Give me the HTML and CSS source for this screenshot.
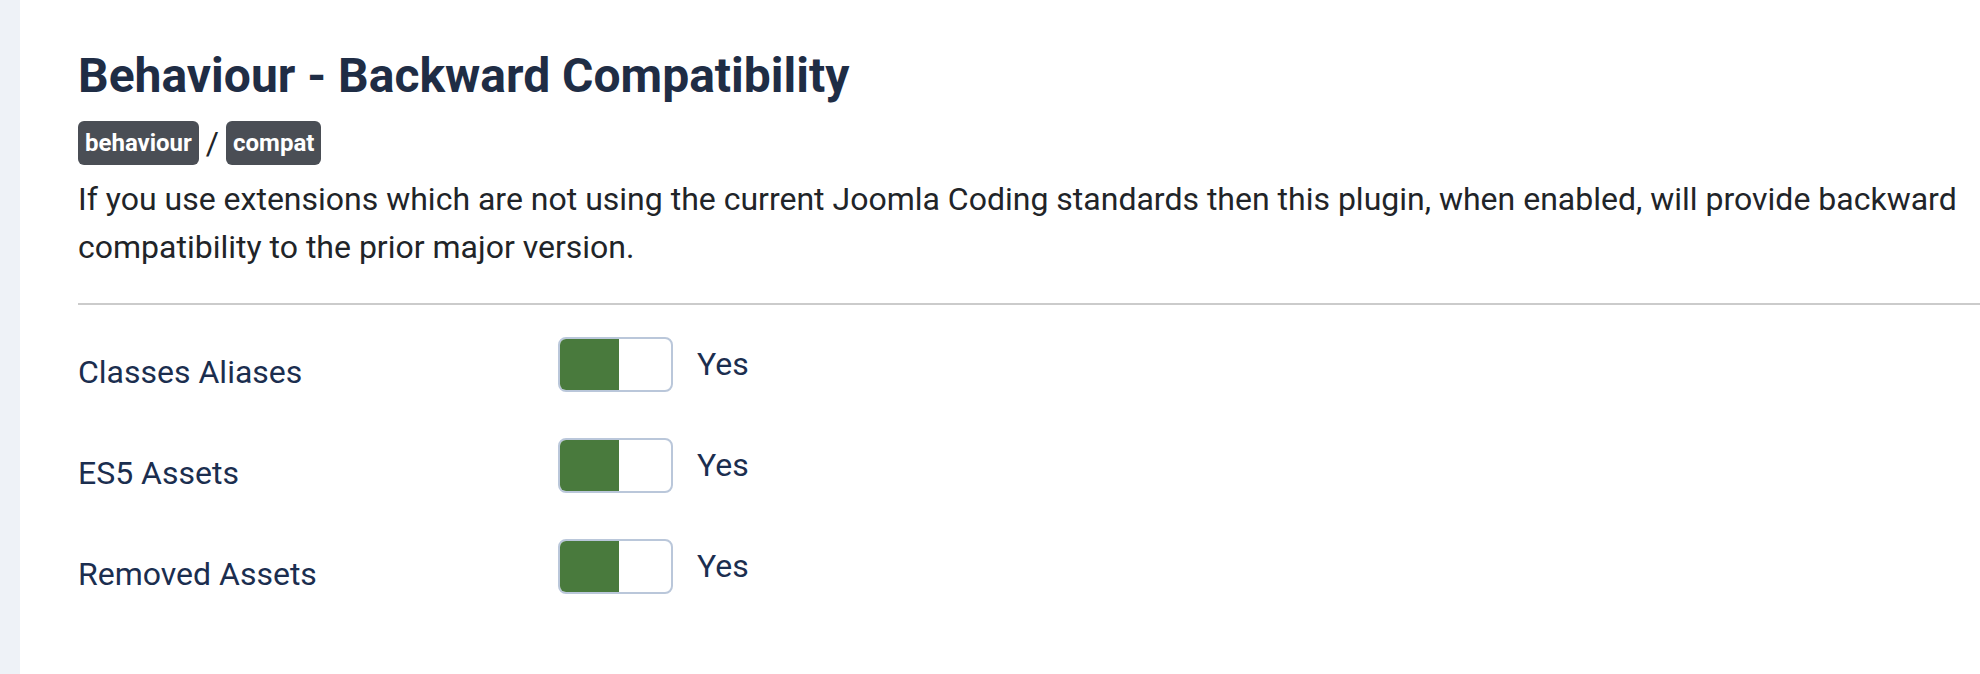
FILE: index.html
```html
<!DOCTYPE html>
<html lang="en">
<head>
<meta charset="utf-8">
<title>Behaviour - Backward Compatibility</title>
<link rel="stylesheet" href="styles.css">
</head>
<body>
<div class="page">
  <aside class="strip"></aside>
  <main class="content">
    <h2 class="title">Behaviour - Backward Compatibility</h2>
    <div class="tags"><span class="badge">behaviour</span><span class="sep">/</span><span class="badge">compat</span></div>
    <p class="desc">If you use extensions which are not using the current Joomla Coding standards then this plugin, when enabled, will provide backward compatibility to the prior major version.</p>
    <hr class="rule">
    <div class="group">
      <div class="label">Classes Aliases</div>
      <div class="controls"><span class="switch"><span class="knob"></span></span><span class="state">Yes</span></div>
    </div>
    <div class="group">
      <div class="label">ES5 Assets</div>
      <div class="controls"><span class="switch"><span class="knob"></span></span><span class="state">Yes</span></div>
    </div>
    <div class="group">
      <div class="label">Removed Assets</div>
      <div class="controls"><span class="switch"><span class="knob"></span></span><span class="state">Yes</span></div>
    </div>
  </main>
</div>
</body>
</html>
```

FILE: styles.css
```css
html, body {
  margin: 0;
  padding: 0;
  background: #ffffff;
  overflow: hidden;
}
body {
  font-family: Roboto, "Liberation Sans", sans-serif;
  font-size: 32px;
  line-height: 1.5;
  color: #212428;
}
.page {
  display: flex;
  min-height: 674px;
}
.strip {
  width: 20px;
  flex: 0 0 20px;
  background: #eef2f7;
}
.content {
  flex: 1;
  padding: 47px 0 0 58px;
  min-width: 0;
}
.title {
  margin: 0 0 16px;
  font-size: 48px;
  line-height: 1.2;
  font-weight: 700;
  color: #1f2d45;
}
.tags {
  display: flex;
  align-items: center;
  height: 44px;
  margin-top: 5px;
}
.badge {
  display: inline-block;
  background: #4a4e55;
  color: #ffffff;
  font-size: 24px;
  font-weight: 700;
  line-height: 1;
  padding: 10px 7px;
  border-radius: 6px;
}
.sep {
  padding: 0 7px;
  font-size: 32px;
  line-height: 1;
  color: #212428;
}
.desc {
  margin: 10px 0 0;
}
.rule {
  margin: 32px 0 32px;
  border: 0;
  border-top: 2px solid #cbcbcb;
  height: 0;
}
.group {
  display: flex;
  margin-bottom: 42px;
}
.label {
  width: 480px;
  flex: 0 0 480px;
  padding-top: 11px;
  color: #1b2e4f;
}
.controls {
  display: flex;
  align-items: center;
  height: 55px;
}
.switch {
  display: block;
  box-sizing: border-box;
  width: 115px;
  height: 55px;
  border: 2px solid #bac7da;
  border-radius: 8px;
  overflow: hidden;
  background: #ffffff;
}
.knob {
  display: block;
  width: 59px;
  height: 100%;
  background: #497a3d;
}
.state {
  margin-left: 24px;
  color: #1b2e4f;
}
```
